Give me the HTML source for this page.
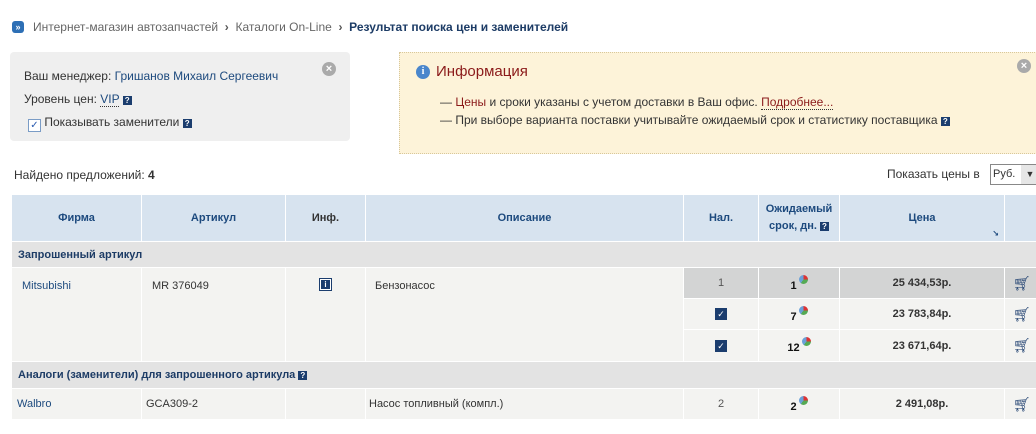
<!DOCTYPE html>
<html><head><meta charset="utf-8"><style>
body{margin:0;width:1036px;height:434px;overflow:hidden;background:#fff;font-family:Tahoma,"Liberation Sans","DejaVu Sans",sans-serif;font-size:12px;color:#333;position:relative}
.a{position:absolute;white-space:nowrap}
.q{display:inline-block;width:9px;height:9px;background:#1b3d6e;color:#fff;font-size:8px;line-height:9px;text-align:center;font-weight:bold;vertical-align:0}
.blue{color:#1d4a7e}
table{position:absolute;left:11px;top:194px;border-collapse:collapse;table-layout:fixed;width:1040px;border:1px solid #9aaabb}
td{border:1px solid #fff;padding:0;font-size:11px}
th{border:1px solid #fff;background:#d7e3ef;color:#1d4a7e;font-size:11px;font-weight:bold;height:44px}
.g td{background:#e3e3e3;height:25px;font-weight:bold;color:#1d3c66;padding-left:6px}
.d td{background:#f3f3f1;height:30px;vertical-align:middle}
.d td.s{background:#d3d4d4}
.c{text-align:center}
.pr{text-align:center;font-weight:bold;color:#333}
.chk{display:inline-block;width:10px;height:10px;border:1px solid #1b3d6e;background:#1b3d6e;color:#fff;font-size:9px;line-height:10px;text-align:center}
.pie{display:inline-block;width:9px;height:9px;border-radius:50%;background:conic-gradient(#d33 0 25%,#5a5 25% 60%,#6aa0d8 60% 100%);vertical-align:5px;margin-left:2px}
</style></head><body>
<div class="a" style="left:12px;top:21px;width:12px;height:12px;border-radius:3px;background:#2d6fb5;color:#fff;font-size:9px;line-height:12px;text-align:center;font-weight:bold">»</div>
<div class="a" style="left:33px;top:20px;font-size:12px;color:#666">Интернет-магазин автозапчастей &nbsp;<b style="color:#555">›</b>&nbsp; Каталоги On-Line &nbsp;<b style="color:#555">›</b>&nbsp; <b style="color:#1d3c66">Результат поиска цен и заменителей</b></div>

<div class="a" style="left:10px;top:52px;width:340px;height:89px;background:#efefef;border-radius:4px"></div>
<div class="a" style="left:322px;top:62px;width:14px;height:14px;border-radius:50%;background:#aaa;color:#fff;font-size:11px;line-height:14px;text-align:center;font-weight:bold">×</div>
<div class="a" style="left:24px;top:69px">Ваш менеджер: <span class="blue">Гришанов Михаил Сергеевич</span></div>
<div class="a" style="left:24px;top:92px">Уровень цен: <span class="blue" style="border-bottom:1px dotted #333">VIP</span> <span class="q">?</span></div>
<div class="a" style="left:28px;top:115px"><span style="display:inline-block;width:11px;height:11px;border:1px solid #7a9cc6;background:#fff;color:#2a5bb0;font-size:10px;line-height:11px;text-align:center;vertical-align:-2px">✓</span> Показывать заменители <span class="q">?</span></div>

<div class="a" style="left:399px;top:52px;width:660px;height:100px;background:#fdf3d9;border:1px dotted #d8c79a"></div>
<div class="a" style="left:1017px;top:59px;width:14px;height:14px;border-radius:50%;background:#aaa;color:#fff;font-size:11px;line-height:14px;text-align:center;font-weight:bold">×</div>
<div class="a" style="left:416px;top:65px;width:14px;height:14px;border-radius:50%;background:#4a86cc;color:#fff;font-size:10px;line-height:14px;text-align:center;font-weight:bold;font-family:serif">i</div>
<div class="a" style="left:436px;top:63px;font-size:15px;color:#8b1a1a">Информация</div>
<div class="a" style="left:440px;top:95px">— <span style="color:#8b1a1a">Цены</span> и сроки указаны с учетом доставки в Ваш офис. <span style="color:#8b1a1a;border-bottom:1px dotted #333">Подробнее...</span></div>
<div class="a" style="left:440px;top:113px">— При выборе варианта поставки учитывайте ожидаемый срок и статистику поставщика <span class="q">?</span></div>

<div class="a" style="left:14px;top:168px">Найдено предложений: <b>4</b></div>
<div class="a" style="left:887px;top:167px">Показать цены в</div>
<div class="a" style="left:990px;top:164px;width:50px;height:19px;border:1px solid #888;background:#fff;font-size:11px;line-height:19px;padding-left:2px">Руб.<span style="position:absolute;left:30px;top:0;width:18px;height:19px;background:#e6e6e6;text-align:center;font-size:9px">▼</span></div>

<table>
<colgroup><col style="width:130px"><col style="width:144px"><col style="width:80px"><col style="width:318px"><col style="width:75px"><col style="width:81px"><col style="width:165px"><col style="width:47px"></colgroup>
<tr><th>Фирма</th><th>Артикул</th><th style="color:#333">Инф.</th><th>Описание</th><th>Нал.</th><th style="line-height:17px">Ожидаемый<br>срок, дн. <span class="q">?</span></th><th style="position:relative">Цена<span style="position:absolute;right:5px;bottom:3px;font-size:8px">↘</span></th><th></th></tr>
<tr class="g"><td colspan="8">Запрошенный артикул</td></tr>
<tr class="d"><td rowspan="3" style="vertical-align:top;padding:12px 0 0 10px" class="blue">Mitsubishi</td><td rowspan="3" style="vertical-align:top;padding:12px 0 0 10px">MR 376049</td><td rowspan="3" class="c" style="vertical-align:top;padding-top:10px"><span style="display:inline-block;width:11px;height:11px;border:1px solid #1b3d6e;background:#fff;position:relative"><span style="position:absolute;left:1px;top:1px;width:9px;height:9px;background:#1b3d6e;color:#fff;font-size:8px;line-height:9px;text-align:center;font-weight:bold">i</span></span></td><td rowspan="3" style="vertical-align:top;padding:12px 0 0 9px">Бензонасос</td><td class="s c" style="color:#555">1</td><td class="s c"><b style="color:#111">1</b><span class="pie"></span></td><td class="s pr">25 434,53р.</td><td class="s" style="padding-left:8px;color:#1b3d6e;font-size:14px">🛒︎</td></tr>
<tr class="d"><td class="c"><span class="chk">✓</span></td><td class="c"><b style="color:#111">7</b><span class="pie"></span></td><td class="pr">23 783,84р.</td><td style="padding-left:8px;color:#1b3d6e;font-size:14px">🛒︎</td></tr>
<tr class="d"><td class="c" style="height:31px"><span class="chk">✓</span></td><td class="c"><b style="color:#111">12</b><span class="pie"></span></td><td class="pr">23 671,64р.</td><td style="padding-left:8px;color:#1b3d6e;font-size:14px">🛒︎</td></tr>
<tr class="g"><td colspan="8" style="height:26px">Аналоги (заменители) для запрошенного артикула <span class="q">?</span></td></tr>
<tr class="d"><td style="padding-left:5px" class="blue">Walbro</td><td style="padding-left:4px">GCA309-2</td><td></td><td style="padding-left:3px">Насос топливный (компл.)</td><td class="c" style="color:#555">2</td><td class="c"><b style="color:#111">2</b><span class="pie"></span></td><td class="pr">2 491,08р.</td><td style="padding-left:8px;color:#1b3d6e;font-size:14px">🛒︎</td></tr>
</table>
</body></html>
